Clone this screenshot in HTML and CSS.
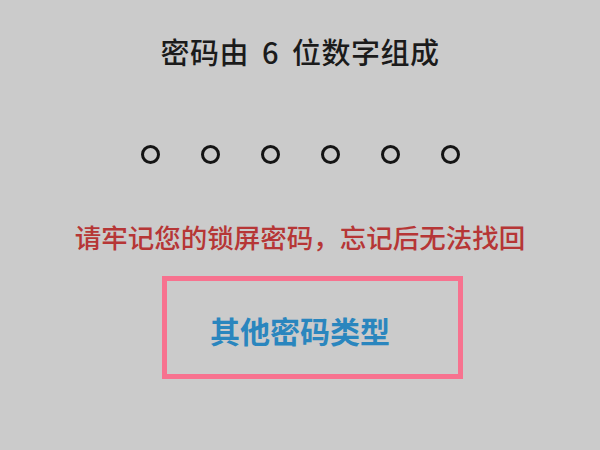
FILE: index.html
```html
<!DOCTYPE html>
<html lang="zh-CN">
<head>
<meta charset="utf-8">
<link rel="stylesheet" href="styles.css">
</head>
<body>
<main class="screen">
  <h1 class="title">密码由<span class="num">6</span>位数字组成</h1>
  <div class="dots">
    <span class="dot"></span><span class="dot"></span><span class="dot"></span>
    <span class="dot"></span><span class="dot"></span><span class="dot"></span>
  </div>
  <p class="warn">请牢记您的锁屏密码，忘记后无法找回</p>
  <div class="btn-row">
    <div class="btn"><span class="btn-text">其他密码类型</span></div>
  </div>
</main>
</body>
</html>
```
FILE: styles.css
```css
html, body {
  margin: 0;
  padding: 0;
}
body {
  background: #cbcbcb;
  width: 600px;
  height: 450px;
  overflow: hidden;
  font-family: "Noto Sans CJK SC", "Noto Sans", sans-serif;
}
.screen {
  display: flex;
  flex-direction: column;
  align-items: center;
}
.title {
  margin: 35px 0 0;
  font-size: 29px;
  line-height: 32px;
  font-weight: 500;
  color: #1b1b1b;
  letter-spacing: 0.5px;
}
.num {
  margin: 0 13px;
}
.dots {
  margin-top: 78px;
  display: flex;
  gap: 41px;
}
.dot {
  width: 19px;
  height: 19px;
  box-sizing: border-box;
  border: 3px solid #141414;
  border-radius: 50%;
}
.warn {
  margin: 58px 0 0;
  font-size: 26.5px;
  line-height: 30px;
  color: #b63636;
  font-weight: 500;
}
.btn-row {
  align-self: stretch;
  padding-left: 162px;
  margin-top: 24px;
}
.btn {
  width: 301px;
  height: 103px;
  box-sizing: border-box;
  border: 5px solid #f7728f;
  display: flex;
  align-items: center;
  padding-left: 43px;
}
.btn-text {
  font-size: 30px;
  font-weight: 600;
  color: #2a86be;
  line-height: 34px;
  margin-top: 4px;
}
```
